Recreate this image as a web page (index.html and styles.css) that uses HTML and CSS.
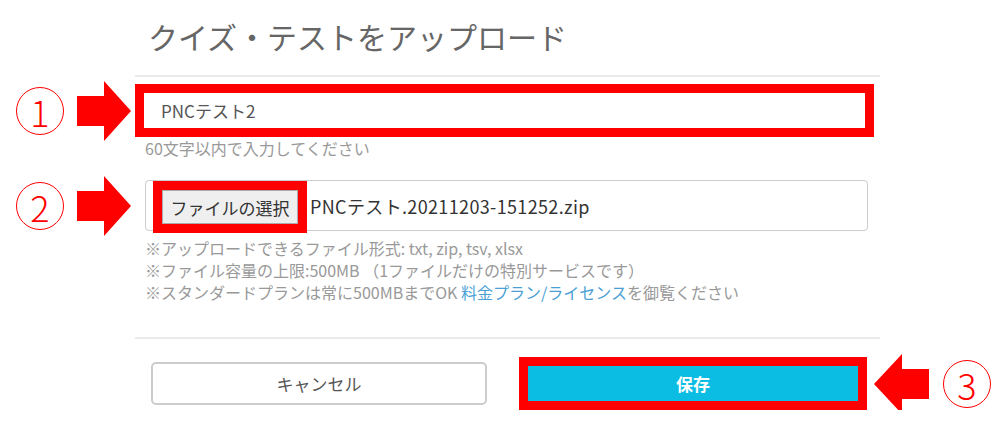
FILE: index.html
```html
<!DOCTYPE html>
<html lang="ja">
<head>
    <meta charset="UTF-8">
    <meta name="viewport" content="width=device-width, initial-scale=1.0">
    <title>クイズ・テストをアップロード</title>
    <link rel="stylesheet" href="styles.css">
</head>
<body>

    <div class="page">
        <h1 class="title">クイズ・テストをアップロード</h1>
        <div class="divider"></div>

        <div class="row row-name">
            <div class="mark">
                <span class="num">1</span>
                <svg class="arrow" viewBox="0 0 54 60"><polygon points="0,15 27,15 27,0 54,30 27,60 27,45 0,45" fill="#f00"/></svg>
            </div>
            <div class="text-field">PNCテスト2</div>
        </div>
        <div class="hint">60文字以内で入力してください</div>

        <div class="row row-file">
            <div class="mark">
                <span class="num">2</span>
                <svg class="arrow" viewBox="0 0 54 60"><polygon points="0,15 27,15 27,0 54,30 27,60 27,45 0,45" fill="#f00"/></svg>
            </div>
            <div class="file-field">
                <span class="file-mark"><button class="file-btn">ファイルの選択</button></span>
                <span class="file-name">PNCテスト.20211203-151252.zip</span>
            </div>
        </div>
        <div class="notes">
            <div>※アップロードできるファイル形式: txt, zip, tsv, xlsx</div>
            <div>※ファイル容量の上限:500MB （1ファイルだけの特別サービスです）</div>
            <div>※スタンダードプランは常に500MBまでOK <a href="#">料金プラン/ライセンス</a>を御覧ください</div>
        </div>

        <div class="divider divider-bottom"></div>

        <div class="actions">
            <button class="btn-cancel">キャンセル</button>
            <button class="btn-save">保存</button>
            <svg class="arrow arrow-left" viewBox="0 0 55 60"><polygon points="55,15 28,15 28,0 0,30 28,60 28,45 55,45" fill="#f00"/></svg>
            <span class="num num-last">3</span>
        </div>
    </div>

</body>
</html>
```

FILE: styles.css
```css
body {
    margin: 0;
    font-family: "Noto Sans CJK JP", "Noto Sans", sans-serif;
    color: #555;
    background-color: #fff;
}

.page {
    width: 1008px;
}

.title {
    margin: 0 0 0 148px;
    padding-top: 14px;
    height: 61px;
    font-size: 30px;
    line-height: 45px;
    font-weight: normal;
    color: #666;
}

.divider {
    margin-left: 135px;
    width: 745px;
    height: 2px;
    background: #ebebeb;
}

.row {
    display: flex;
    align-items: center;
}

.row-name {
    margin-top: 7px;
}

.mark {
    flex: none;
    width: 135px;
    box-sizing: border-box;
    padding-left: 16px;
    display: flex;
    align-items: center;
    gap: 13px;
}

.num {
    flex: none;
    width: 48px;
    height: 48px;
    box-sizing: border-box;
    border: 1.5px solid #f00;
    border-radius: 50%;
    display: flex;
    align-items: center;
    justify-content: center;
    color: #f00;
    font-size: 36px;
    font-weight: 300;
    line-height: 1;
}

/* the arrows reach a little past the rows they point at */
.arrow {
    display: block;
    width: 54px;
    height: 60px;
    margin: -5px 0;
}

.text-field {
    width: 739px;
    height: 53px;
    box-sizing: border-box;
    border: 9px solid #f00;
    padding-left: 17px;
    display: flex;
    align-items: center;
    font-size: 17px;
    color: #555;
}

.hint {
    margin-left: 145px;
    font-size: 16px;
    line-height: 22px;
    color: #999;
}

.row-file {
    margin-top: 21px;
}

.file-field {
    margin-left: 10px;
    width: 723px;
    height: 51px;
    box-sizing: border-box;
    border: 1px solid #ccc;
    border-radius: 4px;
    padding-left: 7px;
    display: flex;
    align-items: flex-start;
}

.file-mark {
    flex: none;
    height: 52px;
    box-sizing: border-box;
    border: 9px solid #f00;
}

.file-btn {
    display: block;
    width: 136px;
    height: 34px;
    padding: 0;
    box-sizing: border-box;
    background: #efefef;
    border: 1px solid #aaa;
    font-family: "Noto Sans CJK JP", sans-serif;
    font-size: 17px;
    color: #333;
}

.file-name {
    margin-left: 3px;
    align-self: center;
    font-size: 18px;
    letter-spacing: 0.35px;
    color: #333;
}

.notes {
    margin: 6px 0 0 145px;
    font-size: 16px;
    line-height: 22px;
    color: #999;
}

.notes a {
    color: #4a9fd5;
    text-decoration: none;
}

.divider-bottom {
    margin-top: 34px;
}

.actions {
    margin-top: 18px;
    padding-left: 151px;
    display: flex;
    align-items: center;
}

.btn-cancel {
    width: 336px;
    height: 43px;
    background: #fff;
    border: 2px solid #ccc;
    border-radius: 5px;
    font-family: "Noto Sans CJK JP", sans-serif;
    font-size: 17px;
    color: #555;
}

.btn-save {
    margin-left: 32px;
    width: 348px;
    height: 53px;
    background: #0bbde3;
    border: 9px solid #f00;
    font-family: "Noto Sans CJK JP", sans-serif;
    font-size: 17px;
    font-weight: bold;
    color: #fff;
}

.arrow-left {
    margin-left: 7px;
    width: 55px;
}

.num-last {
    margin-left: 14px;
}
```
